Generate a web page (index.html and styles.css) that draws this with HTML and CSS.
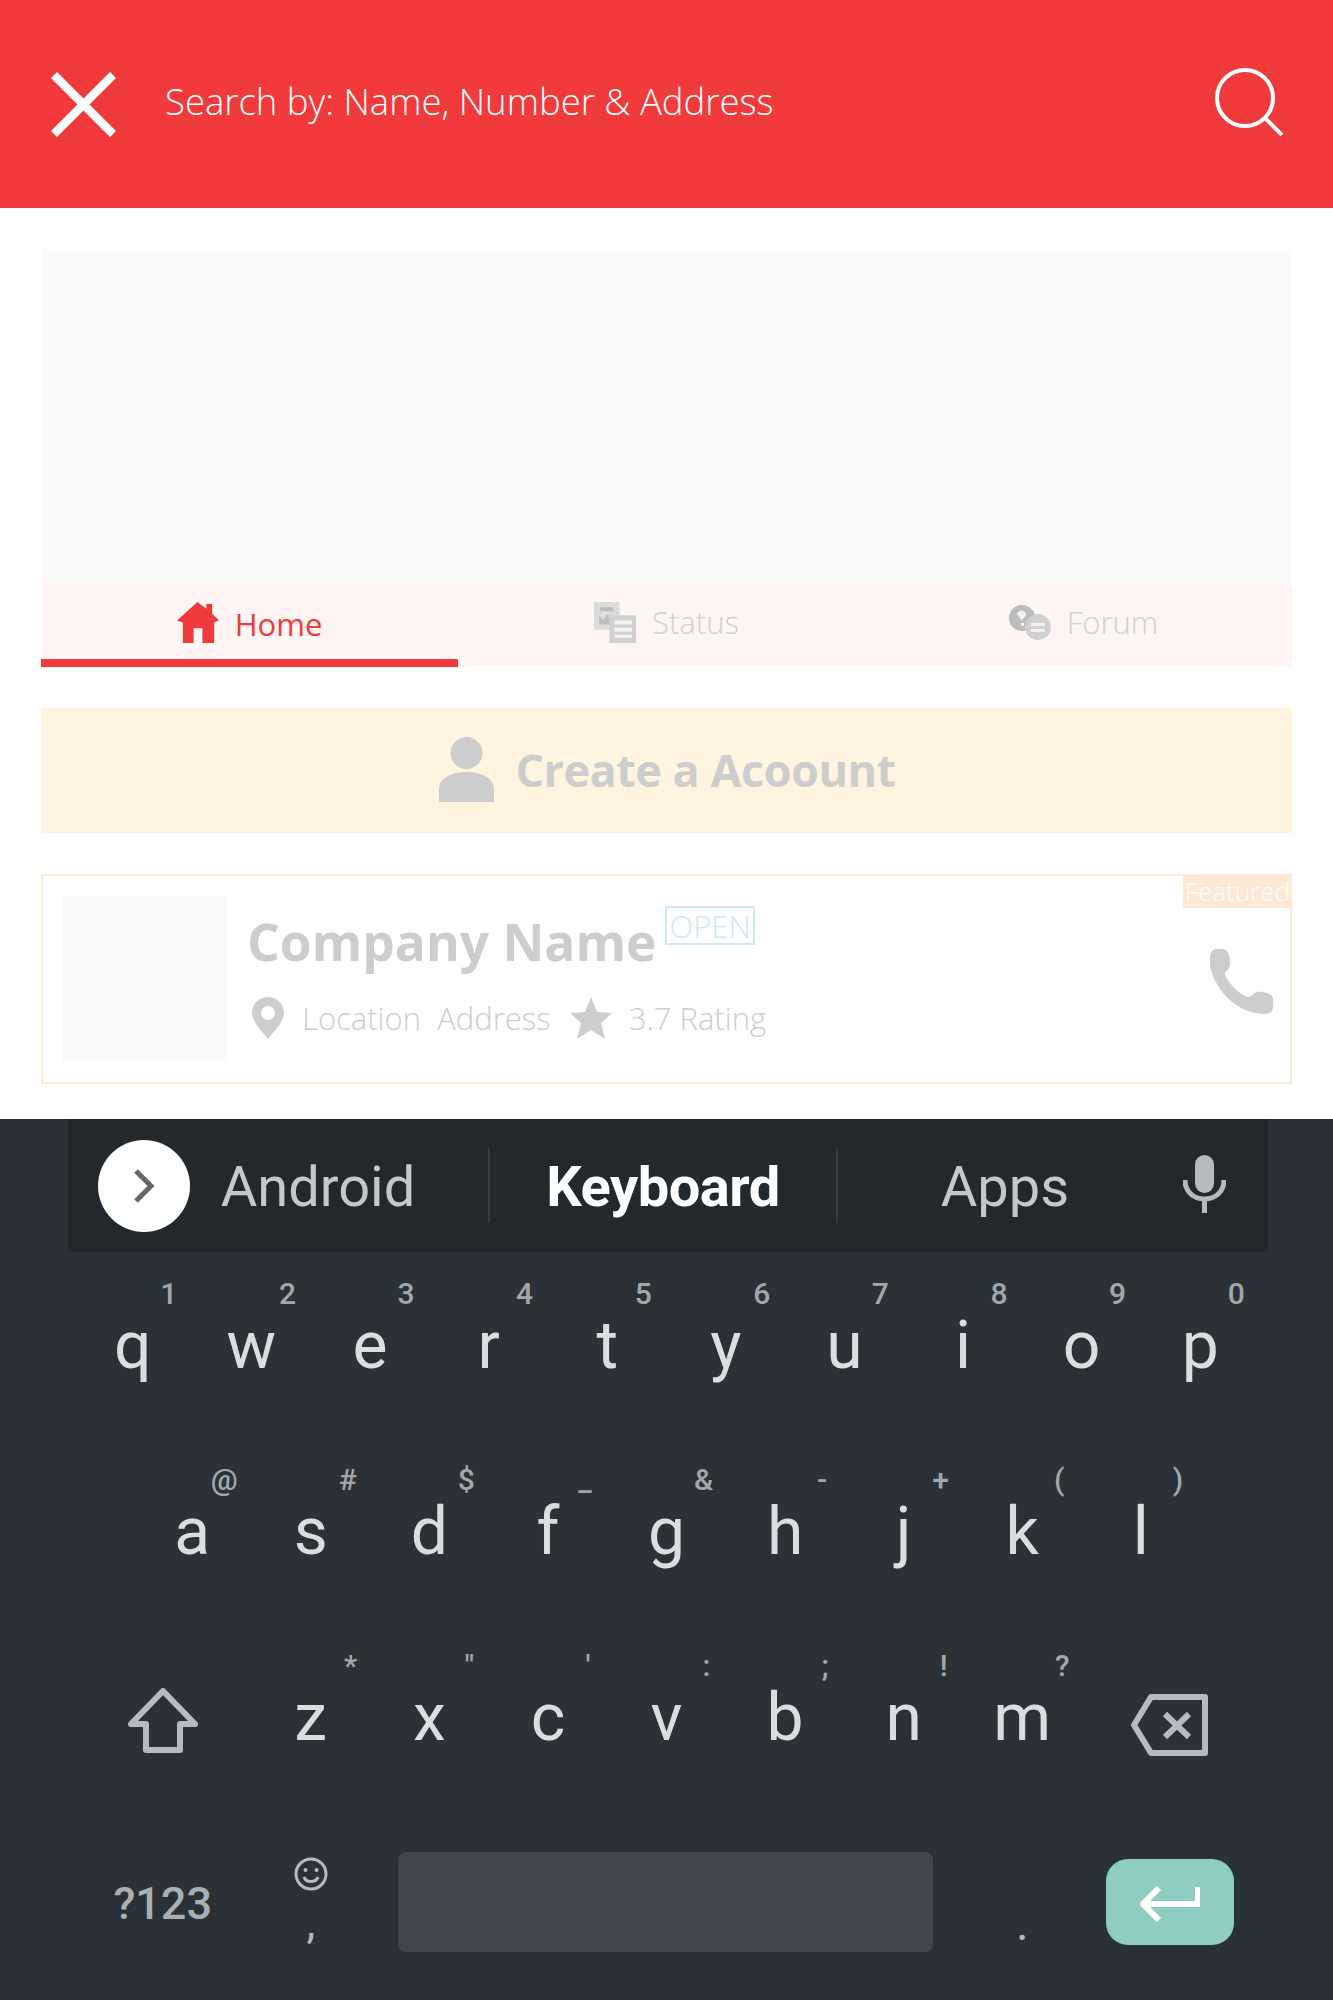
FILE: index.html
```html
<!DOCTYPE html>
<html>
    <head>
        <title>Search</title>
        <meta name="viewport" content="width=device-width, initial-scale=1">
        <link rel="stylesheet" href="styles.css">
    </head>
    <body>
        <header class="search-bar">
            <svg class="icon-close" viewBox="0 0 65 65"><path d="M3 3 62 62M62 3 3 62" /></svg>
            <div class="search-text">Search by: Name, Number &amp; Address</div>
            <svg class="icon-search" viewBox="0 0 68 68"><circle cx="30" cy="30" r="28" /><path d="M50 50 67 67" /></svg>
        </header>

        <main class="content">
            <div class="banner"></div>
            <nav class="tabs">
                <div class="tab active">
                    <svg class="tab-icon" viewBox="0 0 43 42"><path d="M21 0 30 7V2H36V12L43 19 38 21V42H26V27H17V42H6V21L0 19Z" /></svg>
                    <span>Home</span>
                </div>
                <div class="tab tab-up">
                    <svg class="tab-icon" viewBox="0 0 41 40"><path class="dim" d="M0 0H25V27H0Z" /><path class="dark" d="M6 5H19V9H6ZM5 13 9 18 13 12 19 22H5Z" /><path class="mid" d="M15 13H41V40H15Z" /><path class="pale" d="M20 18H37V22H20ZM20 25H37V29H20ZM20 32H37V35H20Z" /></svg>
                    <span>Status</span>
                </div>
                <div class="tab tab-up">
                    <svg class="tab-icon" viewBox="0 0 42 35"><circle class="dark" cx="13" cy="13" r="13" /><circle class="mid" cx="29" cy="22" r="13" /><path class="pale" d="M8 9C9 4 18 5 17 10 16 13 13 13 13 16M12 18H15V21H12ZM22 18H36V21H22ZM22 24H36V27H22Z" /></svg>
                    <span>Forum</span>
                </div>
            </nav>

            <div class="create-account">
                <svg class="icon-user" viewBox="0 0 55 65"><ellipse cx="27.5" cy="16" rx="16" ry="16" /><path d="M0 65V52C0 41 13 35 27.5 35S55 41 55 52V65Z" /></svg>
                <span>Create a Acoount</span>
            </div>

            <article class="card">
                <div class="thumb"></div>
                <div class="card-body">
                    <div class="card-title">
                        <h2>Company Name</h2>
                        <span class="open-tag">OPEN</span>
                    </div>
                    <div class="card-meta">
                        <svg class="icon-pin" viewBox="0 0 32 42"><path fill-rule="evenodd" d="M16 0C25 0 32 7 32 16 32 25 22 34 16 42 10 34 0 25 0 16 0 7 7 0 16 0ZM16 9A7 7 0 1 0 16 23 7 7 0 1 0 16 9Z" /></svg>
                        <span class="address">Location&nbsp; Address</span>
                        <svg class="icon-star" viewBox="0 0 42 42"><path d="M21 0 27 15 42 16 31 26 35 42 21 33 7 42 11 26 0 16 15 15Z" /></svg>
                        <span>3.7 Rating</span>
                    </div>
                </div>
                <svg class="icon-phone" viewBox="0 0 64 65"><path d="M2 2C5-1 14-1 17 2 19 5 21 13 20 17 19 21 15 22 15 25 16 32 31 47 38 48 42 48 43 44 47 43 52 42 60 44 62 47 64 50 64 60 61 63 57 66 49 65 41 63 19 56 6 38 1 21-1 14-1 6 2 2Z" /></svg>
                <span class="featured">Featured</span>
            </article>
        </main>

        <section class="keyboard">
            <div class="suggestions">
                <div class="expand"><svg viewBox="0 0 22 36"><path d="M3 3 18 18 3 33" /></svg></div>
                <div class="word word-first">Android</div>
                <div class="word word-main">Keyboard</div>
                <div class="word word-last">Apps</div>
                <svg class="icon-mic" viewBox="0 0 43 58"><rect x="12" y="0" width="19" height="38" rx="9.5" class="mic-fill" /><path d="M2 25C2 37 11 44 21.5 44S41 37 41 25M21.5 44V58" /></svg>
            </div>

            <div class="row">
                <div class="key">q<span class="hint">1</span></div>
                <div class="key">w<span class="hint">2</span></div>
                <div class="key">e<span class="hint">3</span></div>
                <div class="key">r<span class="hint">4</span></div>
                <div class="key">t<span class="hint">5</span></div>
                <div class="key">y<span class="hint">6</span></div>
                <div class="key">u<span class="hint">7</span></div>
                <div class="key">i<span class="hint">8</span></div>
                <div class="key">o<span class="hint">9</span></div>
                <div class="key">p<span class="hint">0</span></div>
            </div>
            <div class="row row-home">
                <div class="key">a<span class="hint hint-at">@</span></div>
                <div class="key">s<span class="hint">#</span></div>
                <div class="key">d<span class="hint">$</span></div>
                <div class="key">f<span class="hint">_</span></div>
                <div class="key">g<span class="hint">&amp;</span></div>
                <div class="key">h<span class="hint">-</span></div>
                <div class="key">j<span class="hint">+</span></div>
                <div class="key">k<span class="hint">(</span></div>
                <div class="key">l<span class="hint">)</span></div>
            </div>
            <div class="row row-shift">
                <div class="key key-wide">
                    <svg class="icon-shift" viewBox="0 0 70 66"><path d="M35 3 67 36H52V62H18V36H3Z" /></svg>
                </div>
                <div class="key">z<span class="hint">*</span></div>
                <div class="key">x<span class="hint">"</span></div>
                <div class="key">c<span class="hint">'</span></div>
                <div class="key">v<span class="hint">:</span></div>
                <div class="key">b<span class="hint">;</span></div>
                <div class="key">n<span class="hint">!</span></div>
                <div class="key">m<span class="hint">?</span></div>
                <div class="key key-wide">
                    <svg class="icon-backspace" viewBox="0 0 78 62"><path d="M20 3H74V59H20L3 31ZM34 20 58 43M58 20 34 43" /></svg>
                </div>
            </div>
            <div class="row row-last">
                <div class="key key-wide key-symbols">?123</div>
                <div class="key key-comma">
                    <svg class="icon-emoji" viewBox="0 0 34 34"><circle cx="17" cy="17" r="15" /><path d="M10 20C12 26 22 26 24 20" /><circle class="eye" cx="11.500" cy="13" r="2" /><circle class="eye" cx="22.500" cy="13" r="2" /></svg>
                    <span>,</span>
                </div>
                <div class="key-space"><div class="space-bar"></div></div>
                <div class="key key-period">.</div>
                <div class="key key-wide">
                    <div class="enter"><svg viewBox="0 0 60 38"><path d="M58 2V19H4M19 3 3 19 19 35" /></svg></div>
                </div>
            </div>
        </section>
    </body>
</html>
```

FILE: styles.css
```css
* {box-sizing: border-box;}
body {margin: 0; background: #fff; font-family: "Open Sans", sans-serif;}
svg {display: block; flex: none;}

.search-bar {display: flex; align-items: center; height: 208px; padding: 0 50px 0 51px; background: #f03a3b; color: #fff;}
.icon-close {width: 65px; height: 65px; margin-top: 1px;}
.icon-close path {fill: none; stroke: #fff; stroke-width: 8.500;}
.search-text {flex: 1; margin: 0 0 6px 49px; font-size: 36.500px; font-weight: 300;}
.icon-search {width: 68px; height: 68px; margin-bottom: 4px;}
.icon-search circle, .icon-search path {fill: none; stroke: #fff; stroke-width: 4;}

.content {padding: 41px 41px 35px;}
.banner {height: 334px; background: #fafafa;}

.tabs {display: grid; grid-template-columns: repeat(3, 1fr); height: 84px; background: #fff5f4;}
.tab {display: flex; align-items: center; justify-content: center; gap: 16px; font-size: 31px; font-weight: 300; color: #d0d0d0;}
.tab.active {padding-top: 5px; color: #f03a3b; border-bottom: 8px solid #f03a3b; font-weight: 400;}
.tab-up {padding-bottom: 6px;}
.tab-icon {width: 42px; height: 41px; fill: #d0d0d0;}
.active .tab-icon {margin-top: -3px; fill: #f03a3b;}
.tab-icon .dim {fill: #dcdcdc;}
.tab-icon .dark {fill: #bcbcbc;}
.tab-icon .mid {fill: #d0d0d0;}
.tab-icon .pale {fill: #f4f1f0;}

.create-account {display: flex; align-items: center; justify-content: center; gap: 21px; height: 125px; margin-top: 41px; padding: 0 0 2px 2px; background: #fff4e0; color: #cdcdcd; font-size: 45px; font-weight: 700; letter-spacing: -0.5px;}
.icon-user {width: 55px; height: 65px; fill: #cdcdcd;}

.card {position: relative; display: flex; align-items: center; height: 210px; margin-top: 41px; padding: 0 16px 0 19px; border: 2px solid #fde9d4;}
.thumb {width: 166px; height: 167px; background: #fafafa;}
.card-body {flex: 1; margin: 0 0 12px 19px; color: #cdcdcd;}
.card-title {display: flex; align-items: flex-start;}
.card-title h2 {margin: 0; font-size: 51.500px; font-weight: 700; line-height: 68px;}
.open-tag {margin: -1px 0 0 9px; padding: 0 2px; height: 39px; border: 2px solid #cdeede; color: #cdeede; font-size: 31px; font-weight: 300; line-height: 36px;}
.card-meta {display: flex; align-items: center; margin-top: 22px; padding-left: 5px; font-size: 31px; font-weight: 300;}
.icon-pin {width: 32px; height: 42px; fill: #cdcdcd;}
.address {margin: 0 19px 0 18px;}
.icon-star {width: 42px; height: 42px; margin-right: 17px; fill: #cdcdcd;}
.icon-phone {width: 64px; height: 65px; margin-top: 5px; fill: #cdcdcd;}
.featured {position: absolute; top: -2px; right: -2px; width: 109px; height: 34px; background: #fde9d4; color: #fff; font-size: 26px; font-weight: 300; line-height: 34px; text-align: center;}

.keyboard {height: 881px; background: #2a3137; font-family: Roboto, sans-serif; color: #d9dee1;}
.suggestions {display: flex; align-items: center; height: 133px; margin: 0 65px 0 68px; padding-left: 30px; background: #22282b;}
.expand {display: flex; align-items: center; justify-content: center; width: 92px; height: 92px; border-radius: 50%; background: #fff;}
.expand svg {width: 22px; height: 36px;}
.expand path {fill: none; stroke: #666; stroke-width: 5;}
.word {font-size: 56px; line-height: 72px; padding-top: 3px; color: #c4c8ca; text-align: center;}
.word-first {width: 300px; padding-right: 42px; border-right: 2px solid #373d40;}
.word-main {width: 348px; border-right: 2px solid #373d40; color: #fff; font-weight: 700; letter-spacing: -0.5px;}
.word-last {width: 334px;}
.icon-mic {width: 43px; height: 58px; margin: -3px 0 0 11px;}
.icon-mic path {fill: none; stroke: #b5babc; stroke-width: 5;}
.icon-mic .mic-fill {fill: #b5babc;}

.row {display: flex; justify-content: center; height: 186px; padding-top: 2px;}
.row-last {height: 182px;}
.key {position: relative; display: flex; justify-content: center; width: 118.6px; font-size: 66px; line-height: 184px;}
.hint {position: absolute; top: 24px; left: 50%; margin-left: 36px; transform: translateX(-50%); color: #a0a8ac; font-size: 30px; font-weight: 500; line-height: 32px;}
.row-home .hint {margin-left: 37px;}
.row-home .hint-at {margin-left: 32px;}
.row-shift .hint {margin-left: 40px;}
.key-wide {align-items: center; width: 177.5px;}
.icon-shift {width: 70px; height: 66px; margin-top: 6px;}
.icon-shift path {fill: none; stroke: #b5bbbf; stroke-width: 6; stroke-linejoin: round;}
.icon-backspace {width: 78px; height: 62px; margin-top: 14px;}
.icon-backspace path {fill: none; stroke: #b5bbbf; stroke-width: 6; stroke-linejoin: round;}

.key-symbols {padding-top: 3px; color: #a9afb3; font-size: 45px; font-weight: 500;}
.key-comma {flex-direction: column; align-items: center; justify-content: flex-start; padding-top: 45px; color: #b5bbbf; font-size: 44px; line-height: 40px;}
.key-comma span {margin-top: 12px;}
.icon-emoji {width: 34px; height: 34px;}
.icon-emoji circle, .icon-emoji path {fill: none; stroke: #b5bbbf; stroke-width: 3;}
.icon-emoji .eye {fill: #b5bbbf; stroke: none;}
.key-space {width: 592.9px; padding: 40px 30px 0 28px;}
.space-bar {height: 100px; border-radius: 8px; background: #3e464e;}
.key-period {padding-top: 92px; color: #b5bbbf; font-size: 48px; line-height: 40px;}
.enter {display: flex; align-items: center; justify-content: center; width: 128px; height: 86px; border-radius: 22px; background: #8fcdc3;}
.enter svg {width: 60px; height: 38px; margin-top: 3px;}
.enter path {fill: none; stroke: #fff; stroke-width: 6;}
```
